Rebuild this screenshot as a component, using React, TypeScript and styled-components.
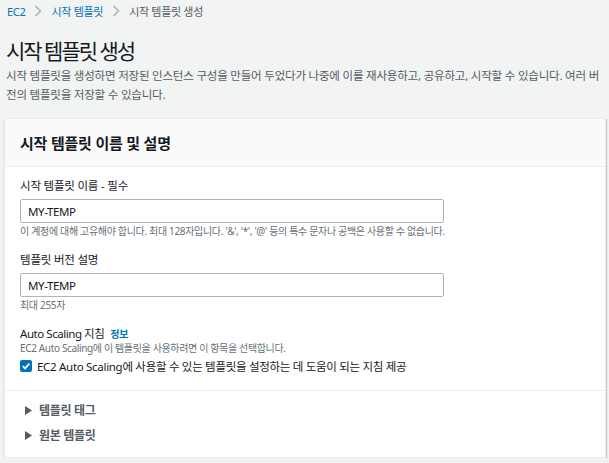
import React from 'react';
import styled, { createGlobalStyle } from 'styled-components';

const GlobalStyle = createGlobalStyle`
    html, body {
        margin: 0;
        padding: 0;
        background: #f2f3f3;
    }
    body {
        font-family: "Noto Sans", "Noto Sans CJK KR", sans-serif;
        color: #16191f;
    }
    * {
        box-sizing: border-box;
    }
`;

export default function App() {
    return (
        <>
            <GlobalStyle />
            <Page>
                <Breadcrumbs>
                    <CrumbLink>EC2</CrumbLink>
                    <Chevron />
                    <CrumbLink>시작 템플릿</CrumbLink>
                    <Chevron />
                    <CrumbCurrent>시작 템플릿 생성</CrumbCurrent>
                </Breadcrumbs>

                <PageTitle>시작 템플릿 생성</PageTitle>
                <PageDescription>
                    시작 템플릿을 생성하면 저장된 인스턴스 구성을 만들어 두었다가 나중에 이를 재사용하고, 공유하고, 시작할 수 있습니다. 여러 버전의 템플릿을 저장할 수 있습니다.
                </PageDescription>

                <Card>
                    <CardHeader>
                        <CardTitle>시작 템플릿 이름 및 설명</CardTitle>
                    </CardHeader>

                    <CardBody>
                        <Field>
                            <FieldLabel>시작 템플릿 이름 - 필수</FieldLabel>
                            <TextInput defaultValue="MY-TEMP" />
                            <FieldHint>
                                이 계정에 대해 고유해야 합니다. 최대 128자입니다. '&amp;', '*', '@' 등의 특수 문자나 공백은 사용할 수 없습니다.
                            </FieldHint>
                        </Field>

                        <Field>
                            <FieldLabel>템플릿 버전 설명</FieldLabel>
                            <TextInput defaultValue="MY-TEMP" />
                            <FieldHint>최대 255자</FieldHint>
                        </Field>

                        <Field>
                            <FieldLabel $tight>
                                Auto Scaling 지침<InfoLink>정보</InfoLink>
                            </FieldLabel>
                            <FieldSubLabel>EC2 Auto Scaling에 이 템플릿을 사용하려면 이 항목을 선택합니다.</FieldSubLabel>
                            <CheckRow>
                                <CheckBox>
                                    <svg width="10" height="10" viewBox="0 0 10 10">
                                        <polyline
                                            points="1.8,5.2 4,7.4 8.4,2.6"
                                            fill="none"
                                            stroke="#ffffff"
                                            strokeWidth="1.8"
                                        />
                                    </svg>
                                </CheckBox>
                                <CheckLabel>
                                    EC2 Auto Scaling에 사용할 수 있는 템플릿을 설정하는 데 도움이 되는 지침 제공
                                </CheckLabel>
                            </CheckRow>
                        </Field>
                    </CardBody>

                    <ExpandList>
                        <ExpandItem>
                            <Caret />
                            <ExpandTitle>템플릿 태그</ExpandTitle>
                        </ExpandItem>
                        <ExpandItem>
                            <Caret />
                            <ExpandTitle>원본 템플릿</ExpandTitle>
                        </ExpandItem>
                    </ExpandList>
                </Card>
            </Page>
        </>
    );
}

function Chevron() {
    return (
        <ChevronIcon width="8" height="12" viewBox="0 0 8 12">
            <polyline points="1.5,1 6.5,6 1.5,11" fill="none" stroke="#aab7b8" strokeWidth="1.6" />
        </ChevronIcon>
    );
}

function Caret() {
    return (
        <CaretIcon width="7" height="9" viewBox="0 0 7 9">
            <polygon points="0,0 7,4.5 0,9" fill="#545b64" />
        </CaretIcon>
    );
}

const Page = styled.div`
    padding: 0 3px 0 4px;
`;

const Breadcrumbs = styled.nav`
    display: flex;
    align-items: center;
    height: 22px;
    padding-left: 3px;
    font-size: 11px;
    letter-spacing: -0.3px;
`;

const CrumbLink = styled.span`
    color: #0073bb;
`;

const CrumbCurrent = styled.span`
    color: #545b64;
`;

const ChevronIcon = styled.svg`
    margin: 0 9px 0 9px;
`;

const PageTitle = styled.h1`
    margin: 14px 0 0 2px;
    height: 30px;
    line-height: 30px;
    font-size: 21px;
    font-weight: 400;
    letter-spacing: -2px;
    color: #16191f;
`;

const PageDescription = styled.p`
    margin: 0 0 0 2px;
    font-size: 11.5px;
    line-height: 19px;
    letter-spacing: -0.2px;
    color: #545b64;
`;

const Card = styled.section`
    margin-top: 14px;
    background: #ffffff;
    border: 1px solid #eaeded;
    box-shadow: 0 1px 1px 0 rgba(0, 28, 36, 0.3), 1px 1px 1px 0 rgba(0, 28, 36, 0.15);
`;

const CardHeader = styled.header`
    display: flex;
    align-items: center;
    height: 48px;
    padding: 0 15px;
    background: #fafafa;
    border-bottom: 1px solid #eaeded;
`;

const CardTitle = styled.h2`
    margin: 0;
    font-size: 15px;
    font-weight: 700;
    letter-spacing: -0.2px;
    color: #16191f;
`;

const CardBody = styled.div`
    display: flex;
    flex-direction: column;
    gap: 14px;
    padding: 11px 15px 16px;
    border-bottom: 1px solid #eaeded;
`;

const Field = styled.div`
    display: flex;
    flex-direction: column;
`;

const FieldLabel = styled.label<{ $tight?: boolean }>`
    line-height: 16px;
    font-size: 11.5px;
    letter-spacing: ${(p) => (p.$tight ? '-0.45px' : '-0.2px')};
    color: #16191f;
`;

const InfoLink = styled.span`
    margin-left: 6px;
    font-size: 10px;
    font-weight: 700;
    letter-spacing: -0.2px;
    color: #0073bb;
`;

const FieldSubLabel = styled.div`
    line-height: 12px;
    font-size: 10px;
    letter-spacing: -0.35px;
    color: #687078;
`;

const TextInput = styled.input`
    margin-top: 5px;
    width: 424px;
    height: 24px;
    padding: 0 7px;
    border: 1px solid #aab7b8;
    border-radius: 2px;
    background: #ffffff;
    font-family: "Noto Sans", "Noto Sans CJK KR", sans-serif;
    font-size: 11.5px;
    letter-spacing: -0.4px;
    color: #16191f;
    outline: none;
`;

const FieldHint = styled.div`
    margin-top: 1px;
    line-height: 14px;
    font-size: 10px;
    letter-spacing: -0.33px;
    color: #687078;
`;

const CheckRow = styled.div`
    display: flex;
    align-items: center;
    gap: 5px;
    margin-top: 4px;
    height: 16px;
`;

const CheckBox = styled.span`
    display: flex;
    align-items: center;
    justify-content: center;
    width: 12px;
    height: 12px;
    border-radius: 2px;
    background: #0073bb;
`;

const CheckLabel = styled.span`
    font-size: 11.5px;
    letter-spacing: -0.3px;
    color: #16191f;
`;

const ExpandList = styled.div`
    display: flex;
    flex-direction: column;
    gap: 9px;
    padding: 11px 20px 14px;
`;

const ExpandItem = styled.div`
    display: flex;
    align-items: center;
    gap: 7px;
    height: 16px;
`;

const CaretIcon = styled.svg`
    flex-shrink: 0;
`;

const ExpandTitle = styled.span`
    font-size: 12px;
    font-weight: 700;
    letter-spacing: -0.3px;
    color: #545b64;
`;
